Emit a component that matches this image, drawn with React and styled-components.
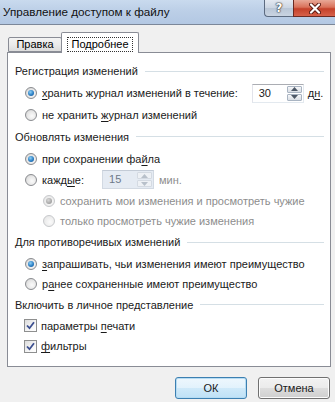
import React from "react";
import styled, { createGlobalStyle } from "styled-components";

const GlobalStyle = createGlobalStyle`
  html, body {
    margin: 0;
    padding: 0;
  }
  body {
    width: 335px;
    height: 402px;
    overflow: hidden;
    font-family: "Liberation Sans", "DejaVu Sans", sans-serif;
    font-size: 11px;
    color: #000;
  }
`;

const Window = styled.div`
  width: 335px;
  height: 402px;
  display: flex;
  flex-direction: column;
  background: #f0f0f0;
  box-sizing: border-box;
`;

const TitleBar = styled.div`
  height: 24px;
  display: flex;
  justify-content: space-between;
  align-items: flex-start;
  background: linear-gradient(180deg, #c9daee 0%, #bccfe7 45%, #b3c8e3 100%);
  border-bottom: 1px solid #7b8799;
`;

const Title = styled.div`
  padding-left: 3px;
  line-height: 24px;
  font-size: 11.7px;
  color: #111;
`;

const Controls = styled.div`
  display: flex;
  align-items: flex-start;
`;

const HelpButton = styled.div`
  width: 29px;
  height: 17px;
  box-sizing: border-box;
  border: 1px solid #5c6b80;
  border-top: none;
  border-right: none;
  border-radius: 0 0 0 4px;
  background: linear-gradient(180deg, #e3e9f1 0%, #cbd5e2 50%, #b9c6d6 51%, #c9d4e2 100%);
  display: flex;
  align-items: center;
  justify-content: center;
  font: bold 12px "DejaVu Sans", sans-serif;
  color: #fff;
  text-shadow: 0 0 1px #333, 0 0 1px #333, 0 0 2px #333;
`;

const CloseButton = styled.div`
  width: 42px;
  height: 17px;
  box-sizing: border-box;
  border: 1px solid #6b2a22;
  border-top: none;
  border-right: none;
  background: linear-gradient(180deg, #e8a897 0%, #d9715a 45%, #c4412a 55%, #d7614a 100%);
  display: flex;
  align-items: center;
  justify-content: center;
`;

const Body = styled.div`
  flex: 1;
  display: flex;
  flex-direction: column;
  padding: 7px 5px 0 7px;
`;

const Tabs = styled.div`
  position: relative;
  z-index: 1;
  display: flex;
  align-items: flex-start;
  height: 21px;
  margin-bottom: -1px;
  padding-left: 1px;
`;

const Tab = styled.div`
  box-sizing: border-box;
  height: ${(p) => (p.$active ? "21px" : "15px")};
  margin-top: ${(p) => (p.$active ? "0" : "5px")};
  margin-left: ${(p) => (p.$active ? "-1px" : "0")};
  width: ${(p) => p.$width}px;
  border: 1px solid #898c95;
  border-bottom: ${(p) => (p.$active ? "none" : "1px solid #898c95")};
  border-radius: 2px 2px 0 0;
  background: ${(p) =>
    p.$active ? "#fff" : "linear-gradient(180deg, #f3f3f3 0%, #ebebeb 50%, #dcdcdc 100%)"};
  display: flex;
  align-items: ${(p) => (p.$active ? "flex-start" : "center")};
  justify-content: center;
  padding-top: ${(p) => (p.$active ? "5px" : "0")};
  line-height: 13px;
`;

const FocusLabel = styled.span`
  outline: 1px dotted #333;
  outline-offset: 0;
  padding: 0 3px;
`;

const Panel = styled.div`
  box-sizing: border-box;
  width: 324px;
  height: 315px;
  border: 1px solid #898c95;
  background: #fff;
  padding: 7px 6px 0 7px;
  display: flex;
  flex-direction: column;
`;

const SectionHeader = styled.div`
  height: ${(p) => p.$h}px;
  display: flex;
  align-items: center;
  gap: 7px;
  color: #1a1a1a;
  &::after {
    content: "";
    flex: 1;
    height: 1px;
    background: #d5dfe5;
  }
`;

const Row = styled.div`
  height: ${(p) => p.$h}px;
  display: flex;
  align-items: center;
  padding-left: ${(p) => p.$indent}px;
  color: ${(p) => (p.$disabled ? "#8d8d8d" : "#1a1a1a")};
  white-space: nowrap;
`;

const RadioCircle = styled.span`
  position: relative;
  box-sizing: border-box;
  width: 12px;
  height: 12px;
  margin-right: 5px;
  border-radius: 50%;
  flex: none;
  border: 1px solid ${(p) => (p.$disabled ? "#c7c9cc" : "#8a8c90")};
  background: ${(p) =>
    p.$disabled
      ? "radial-gradient(circle at 60% 60%, #fbfbfb 0%, #ececec 60%, #dedede 100%)"
      : "radial-gradient(circle at 60% 60%, #fbfbfb 0%, #e6e6e6 55%, #c9c9c9 100%)"};
  &::after {
    content: "";
    display: ${(p) => (p.$checked ? "block" : "none")};
    position: absolute;
    left: 2px;
    top: 2px;
    width: 6px;
    height: 6px;
    border-radius: 50%;
    background: ${(p) =>
      p.$disabled
        ? "radial-gradient(circle at 40% 35%, #d8d8d8 0%, #9a9a9a 80%)"
        : "radial-gradient(circle at 40% 35%, #8fd0f6 0%, #2b7fc4 55%, #154f8f 100%)"};
  }
`;

const CheckBox = styled.span`
  box-sizing: border-box;
  width: 13px;
  height: 13px;
  margin-right: 4px;
  margin-left: -1px;
  flex: none;
  border: 1px solid #8e8f8f;
  background: linear-gradient(135deg, #dcdcdc 0%, #f6f6f6 60%, #ffffff 100%);
  display: flex;
  align-items: center;
  justify-content: center;
`;

const U = styled.span`
  text-decoration: underline;
  text-underline-offset: 2px;
`;

const Spinner = styled.div`
  box-sizing: border-box;
  flex: none;
  width: ${(p) => p.$w}px;
  height: 19px;
  margin-left: ${(p) => p.$ml}px;
  margin-right: ${(p) => p.$mr}px;
  display: flex;
  border: 1px solid ${(p) => (p.$disabled ? "#c3cbd6" : "#abadb3")};
  border-left-color: ${(p) => (p.$disabled ? "#d2d9e2" : "#e2e3ea")};
  border-right-color: ${(p) => (p.$disabled ? "#d2d9e2" : "#e3e9ef")};
  border-bottom-color: ${(p) => (p.$disabled ? "#d2d9e2" : "#e3e9ef")};
  background: ${(p) => (p.$disabled ? "#e5ebf3" : "#fff")};
  color: ${(p) => (p.$disabled ? "#6d7988" : "#1a1a1a")};
`;

const SpinValue = styled.div`
  flex: 1;
  padding-left: 6px;
  line-height: 17px;
`;

const SpinButtons = styled.div`
  width: 15px;
  display: flex;
  flex-direction: column;
  gap: 1px;
  padding: 1px 1px 1px 0;
`;

const SpinHalf = styled.div`
  flex: 1;
  box-sizing: border-box;
  border: 1px solid ${(p) => (p.$disabled ? "#d4dae2" : "#a9b4c2")};
  border-radius: 1px;
  background: ${(p) =>
    p.$disabled
      ? "#eef1f5"
      : "linear-gradient(180deg, #f7f8fa 0%, #e7eaee 50%, #dadfe5 100%)"};
  display: flex;
  align-items: center;
  justify-content: center;
`;

const Unit = styled.span`
  color: ${(p) => (p.$disabled ? "#8d8d8d" : "#1a1a1a")};
`;

const Footer = styled.div`
  display: flex;
  justify-content: flex-end;
  gap: 11px;
  margin-top: 10px;
`;

const Button = styled.div`
  box-sizing: border-box;
  width: 72px;
  height: 22px;
  border-radius: 3px;
  display: flex;
  align-items: center;
  justify-content: center;
  color: #1a1a1a;
  border: 1px solid ${(p) => (p.$default ? "#3c7fb1" : "#707070")};
  background: ${(p) =>
    p.$default
      ? "linear-gradient(180deg, #eef7fd 0%, #e2f2fc 50%, #cfe9f9 51%, #bfe1f6 100%)"
      : "linear-gradient(180deg, #f2f2f2 0%, #ebebeb 50%, #dddddd 51%, #cfcfcf 100%)"};
  box-shadow: inset 0 0 0 1px ${(p) => (p.$default ? "#b6dcf3" : "#fcfcfc")};
`;

const Arrow = ({ up, disabled }) => (
  <svg width="7" height="4" viewBox="0 0 7 4">
    <path
      d={up ? "M0 4 L3.5 0 L7 4 Z" : "M0 0 L3.5 4 L7 0 Z"}
      fill={disabled ? "#b8c0ca" : "#4d5866"}
    />
  </svg>
);

const Spin = ({ value, w, ml, mr = 4, disabled }) => (
  <Spinner $w={w} $ml={ml} $mr={mr} $disabled={disabled}>
    <SpinValue>{value}</SpinValue>
    <SpinButtons>
      <SpinHalf $disabled={disabled}>
        <Arrow up disabled={disabled} />
      </SpinHalf>
      <SpinHalf $disabled={disabled}>
        <Arrow disabled={disabled} />
      </SpinHalf>
    </SpinButtons>
  </Spinner>
);

const Check = () => (
  <CheckBox>
    <svg width="9" height="9" viewBox="0 0 9 9">
      <path d="M1 4.5 L3.5 7.2 L8 1.2" fill="none" stroke="#3c4f8f" strokeWidth="1.8" />
    </svg>
  </CheckBox>
);

export default function App() {
  return (
    <>
      <GlobalStyle />
      <Window>
        <TitleBar>
          <Title>Управление доступом к файлу</Title>
          <Controls>
            <HelpButton>?</HelpButton>
            <CloseButton>
              <svg width="12" height="11" viewBox="0 0 12 11">
                <path
                  d="M2 1.5 L10 9.5 M10 1.5 L2 9.5"
                  stroke="#5a1a12"
                  strokeWidth="4"
                  strokeLinecap="round"
                />
                <path
                  d="M2 1.5 L10 9.5 M10 1.5 L2 9.5"
                  stroke="#fff"
                  strokeWidth="2.2"
                  strokeLinecap="round"
                />
              </svg>
            </CloseButton>
          </Controls>
        </TitleBar>

        <Body>
          <Tabs>
            <Tab $width={54}>Правка</Tab>
            <Tab $active $width={78}>
              <FocusLabel>Подробнее</FocusLabel>
            </Tab>
          </Tabs>

          <Panel>
            <SectionHeader $h={22}>Регистрация изменений</SectionHeader>
            <Row $h={22} $indent={10}>
              <RadioCircle $checked />
              <span>
                <U>х</U>ранить журнал изменений в течение:
              </span>
              <Spin value="30" w={52} ml={14} />
              <span>
                д<U>н</U>.
              </span>
            </Row>
            <Row $h={21} $indent={10}>
              <RadioCircle />
              <span>
                не хранить <U>ж</U>урнал изменений
              </span>
            </Row>

            <SectionHeader $h={23}>Обновлять изменения</SectionHeader>
            <Row $h={21} $indent={10}>
              <RadioCircle $checked />
              <span>
                при сохранении фа<U>й</U>ла
              </span>
            </Row>
            <Row $h={21} $indent={10}>
              <RadioCircle />
              <span>
                кажд<U>ы</U>е:
              </span>
              <Spin value="15" w={52} ml={18} mr={5} disabled />
              <Unit $disabled>мин.</Unit>
            </Row>
            <Row $h={21} $indent={28} $disabled>
              <RadioCircle $checked $disabled />
              <span>сохранить мои изменения и просмотреть чужие</span>
            </Row>
            <Row $h={20} $indent={28} $disabled>
              <RadioCircle $disabled />
              <span>только просмотреть чужие изменения</span>
            </Row>

            <SectionHeader $h={22}>Для противоречивых изменений</SectionHeader>
            <Row $h={21} $indent={10}>
              <RadioCircle $checked />
              <span>
                <U>з</U>апрашивать, чьи изменения имеют преимущество
              </span>
            </Row>
            <Row $h={20} $indent={10}>
              <RadioCircle />
              <span>
                р<U>а</U>нее сохраненные имеют преимущество
              </span>
            </Row>

            <SectionHeader $h={21}>Включить в личное представление</SectionHeader>
            <Row $h={21} $indent={10}>
              <Check />
              <span>
                параметры <U>п</U>ечати
              </span>
            </Row>
            <Row $h={20} $indent={10}>
              <Check />
              <span>
                <U>ф</U>ильтры
              </span>
            </Row>
          </Panel>

          <Footer>
            <Button $default>ОК</Button>
            <Button>Отмена</Button>
          </Footer>
        </Body>
      </Window>
    </>
  );
}
